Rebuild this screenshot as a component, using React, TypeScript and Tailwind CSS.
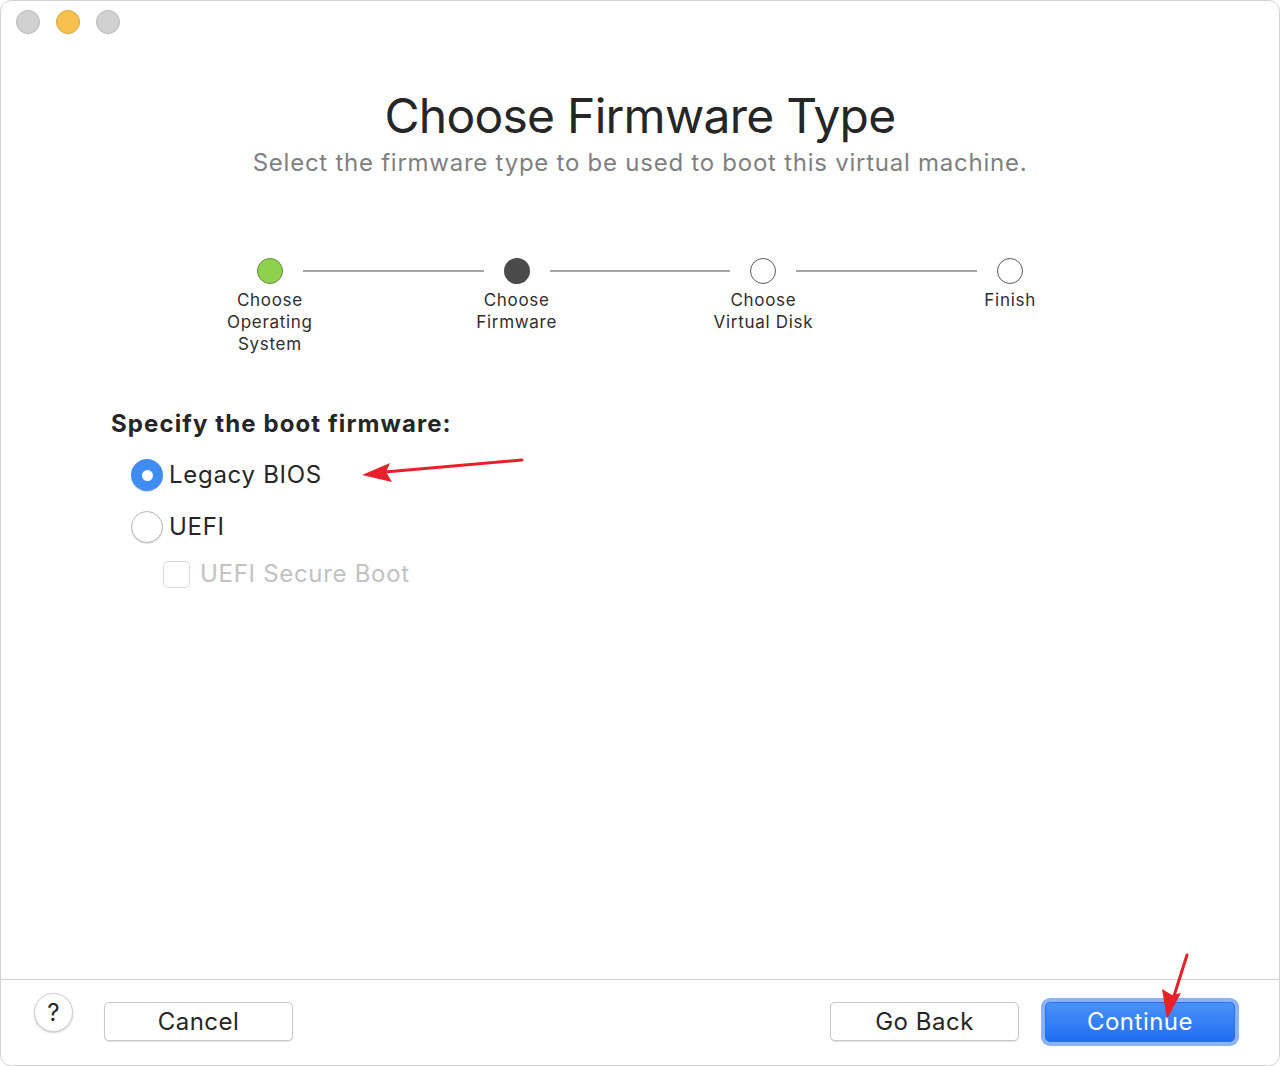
import React from 'react';

const FONT = 'font-["Inter","Liberation_Sans",sans-serif]';

type StepState = 'done' | 'current' | 'todo';

interface Step {
  lines: string[];
  state: StepState;
}

const steps: Step[] = [
  { lines: ['Choose', 'Operating', 'System'], state: 'done' },
  { lines: ['Choose', 'Firmware'], state: 'current' },
  { lines: ['Choose', 'Virtual Disk'], state: 'todo' },
  { lines: ['Finish'], state: 'todo' },
];

function StepDot({ state }: { state: StepState }) {
  if (state === 'done') {
    return <div className="w-[26px] h-[26px] rounded-full bg-[#8fd14f] border border-[#5f8f35] shrink-0" />;
  }
  if (state === 'current') {
    return <div className="w-[26px] h-[26px] rounded-full bg-[#4a4a4a] shrink-0" />;
  }
  return <div className="w-[26px] h-[26px] rounded-full bg-white border border-[#5a5a5a] shrink-0" />;
}

function Stepper() {
  return (
    <div className="grid grid-cols-4 w-[987px] mx-auto mt-[80px]">
      {steps.map((step, i) => (
        <div key={i} className="flex flex-col items-center">
          <div className="flex items-center w-full h-[26px]">
            <div className="flex-1 pr-[20px]">
              {i > 0 && <div className="h-[2px] bg-[#a6a6a6]" />}
            </div>
            <StepDot state={step.state} />
            <div className="flex-1 pl-[20px]">
              {i < steps.length - 1 && <div className="h-[2px] bg-[#a6a6a6]" />}
            </div>
          </div>
          <div className="mt-[5px] text-[17px] leading-[22px] tracking-[0.7px] text-[#2e2e2e] text-center">
            {step.lines.map((l) => (
              <div key={l}>{l}</div>
            ))}
          </div>
        </div>
      ))}
    </div>
  );
}

function Radio({ checked }: { checked: boolean }) {
  if (checked) {
    return (
      <div className="w-[32px] h-[32px] rounded-full bg-[#3f8cf3] flex items-center justify-center shadow-[0_1px_1px_rgba(0,0,0,0.15)]">
        <div className="w-[11px] h-[11px] rounded-full bg-white" />
      </div>
    );
  }
  return (
    <div className="w-[32px] h-[32px] rounded-full bg-white border border-[#b5b5b5] shadow-[0_1px_1px_rgba(0,0,0,0.12)]" />
  );
}

function Button({ label }: { label: string }) {
  return (
    <button className="w-[189px] h-[39px] rounded-[5px] bg-white border border-[#c8c8c8] shadow-[0_1px_1px_rgba(0,0,0,0.12)] text-[24px] tracking-[0.5px] text-[#262626] leading-none">
      {label}
    </button>
  );
}

export default function App() {
  return (
    <div className={`${FONT} w-[1280px] h-[1066px] bg-white relative overflow-hidden`}>
      <div className="w-full h-full rounded-[11px] border border-[#d4d4d4] flex flex-col">
        {/* title bar */}
        <div className="h-[42px] flex items-center gap-4 pl-[15px] shrink-0">
          <div className="w-6 h-6 rounded-full bg-[#d1d1d1] border border-[#b8b8b8]" />
          <div className="w-6 h-6 rounded-full bg-[#f7c150] border border-[#dca23a]" />
          <div className="w-6 h-6 rounded-full bg-[#d1d1d1] border border-[#b8b8b8]" />
        </div>

        <div className="flex-1">
          <h1 className="mt-[45px] text-center text-[48px] leading-[56px] text-[#262626] font-normal tracking-[-0.75px]">
            Choose Firmware Type
          </h1>
          <p className="mt-[4px] text-center text-[24px] leading-[30px] tracking-[0.75px] text-[#7f7f7f]">
            Select the firmware type to be used to boot this virtual machine.
          </p>

          <Stepper />

          <div className="pl-[110px] mt-[54px]">
            <h2 className="text-[24px] leading-[30px] font-bold tracking-[1.1px] text-[#262626]">Specify the boot firmware:</h2>
            <div className="pl-[20px] mt-[10px]">
              <div className="h-[52px] flex items-center gap-[6px]">
                <Radio checked />
                <span className="text-[24px] tracking-[0.7px] text-[#262626]">Legacy BIOS</span>
              </div>
              <div className="h-[52px] flex items-center gap-[6px]">
                <Radio checked={false} />
                <span className="text-[24px] tracking-[0.7px] text-[#262626]">UEFI</span>
              </div>
              <div className="h-[42px] flex items-center gap-[10px] pl-[32px]">
                <div className="w-[27px] h-[27px] rounded-[5px] border border-[#dadada] bg-white" />
                <span className="text-[24px] tracking-[0.7px] text-[#c2c2c2]">UEFI Secure Boot</span>
              </div>
            </div>
          </div>
        </div>

        {/* footer */}
        <div className="h-[86px] border-t border-[#d0d0d0] flex items-start pl-[33px] pr-[40px] pt-[13px] shrink-0">
          <div className="w-[39px] h-[39px] rounded-full bg-white border border-[#cfcfcf] shadow-[0_1px_2px_rgba(0,0,0,0.2)] flex items-center justify-center text-[24px] text-[#262626]">
            ?
          </div>
          <div className="ml-[31px] mt-[9px]">
            <Button label="Cancel" />
          </div>
          <div className="flex-1" />
          <div className="mt-[9px]">
            <Button label="Go Back" />
          </div>
          <div className="ml-[22px] mt-[5px] rounded-[9px] bg-[#8ab3f6] p-[4px]">
            <button className="w-[190px] h-[40px] rounded-[5px] bg-gradient-to-b from-[#4a92f8] to-[#1f6ef1] border border-[#2b6fe6] text-white text-[24px] tracking-[0.5px] leading-none">
              Continue
            </button>
          </div>
        </div>
      </div>

      {/* annotation arrows */}
      <svg className="absolute inset-0 pointer-events-none" width="1280" height="1066">
        <line x1="522" y1="460" x2="385" y2="472" stroke="#e8202a" strokeWidth="3" strokeLinecap="round" />
        <polygon points="362,475 390,463 386,472 392,482" fill="#e8202a" />
        <line x1="1187" y1="955" x2="1174" y2="996" stroke="#e8202a" strokeWidth="3" strokeLinecap="round" />
        <polygon points="1167,1019 1162,989 1172,995 1181,993" fill="#e8202a" />
      </svg>
    </div>
  );
}
